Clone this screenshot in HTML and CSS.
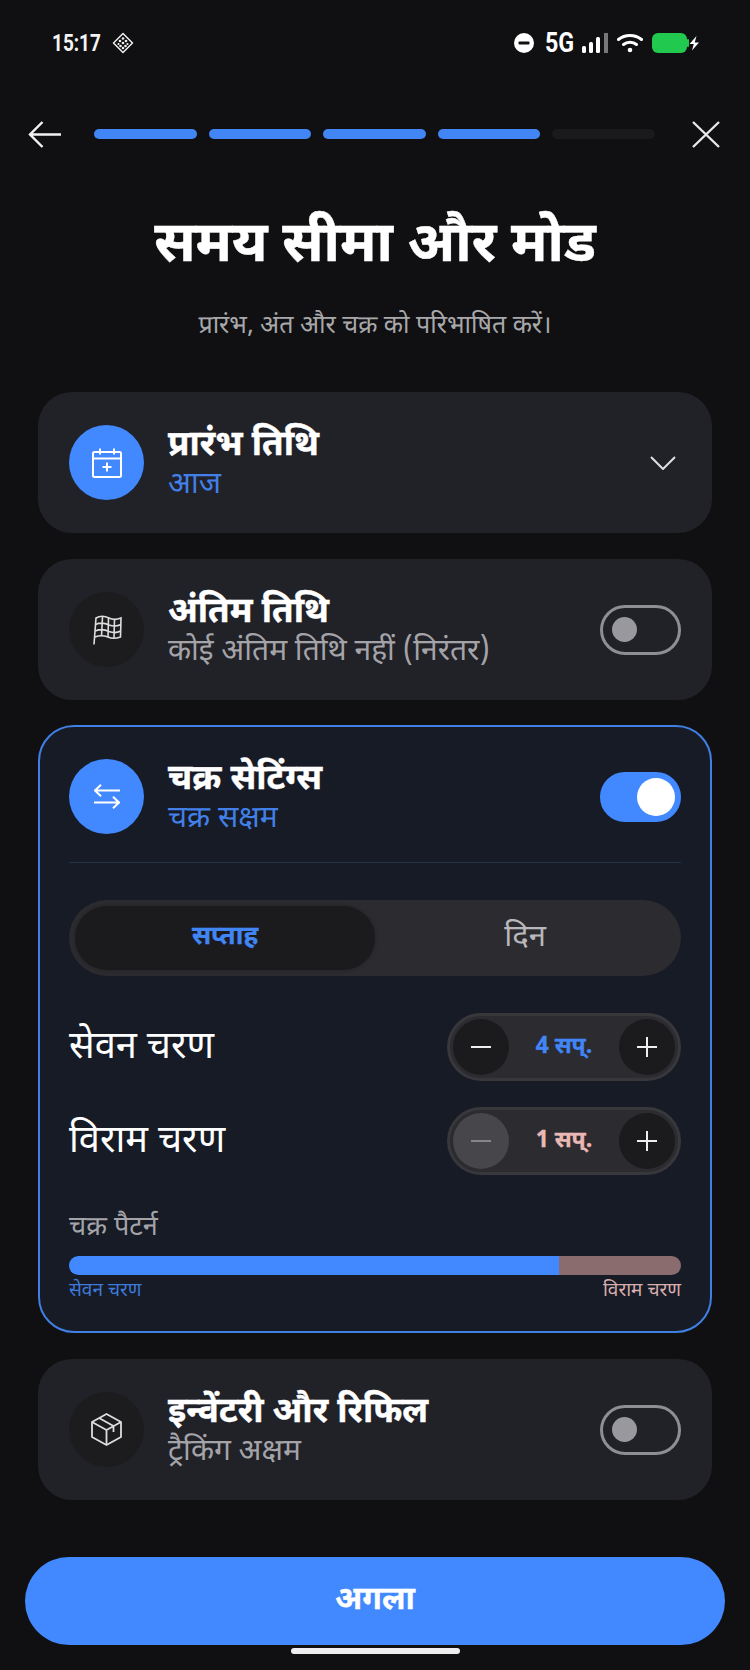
FILE: index.html
```html
<!DOCTYPE html>
<html lang="hi">
<head>
<meta charset="utf-8">
<title>समय सीमा और मोड</title>
<link rel="stylesheet" href="styles.css">
</head>
<body>
<main class="screen">
  <div class="status">
    <div class="status-left">
      <span class="time">15:17</span>
      <svg class="st-diamond" viewBox="0 0 22 22" fill="none" stroke="#eee" stroke-width="1.5"><path d="M11 1.500 20.500 11 11 20.500 1.500 11Z" stroke-linejoin="round"/><g fill="#eee" stroke="none"><circle cx="11" cy="6.500" r="1.300"/><circle cx="8" cy="9" r="1.300"/><circle cx="14" cy="9" r="1.300"/><circle cx="11" cy="11" r="1.300"/><circle cx="6.500" cy="12" r="1.100"/><circle cx="15.500" cy="12" r="1.100"/><circle cx="8.500" cy="14" r="1.300"/><circle cx="13.500" cy="14" r="1.300"/><circle cx="11" cy="16" r="1.300"/></g></svg>
    </div>
    <div class="status-right">
      <svg class="st-dnd" viewBox="0 0 20 20"><circle cx="10" cy="10" r="10" fill="#fff"/><rect x="4.500" y="8.400" width="11" height="3.200" rx="1" fill="#101012"/></svg>
      <span class="net">5G</span>
      <svg class="st-signal" viewBox="0 0 26 20"><rect x="0" y="13" width="4" height="7" rx="1.500" fill="#fff"/><rect x="7" y="9" width="4" height="11" rx="1.500" fill="#fff"/><rect x="14" y="4" width="4" height="16" rx="1.500" fill="#fff"/><rect x="22" y="0" width="4" height="20" fill="#77777a"/></svg>
      <svg class="st-wifi" viewBox="0 0 26 20" fill="none" stroke="#fff" stroke-width="3" stroke-linecap="round"><path d="M1.500 6.500C8 1 18 1 24.500 6.500"/><path d="M6.500 11.500C10 8.500 16 8.500 19.500 11.500"/><circle cx="13" cy="17" r="2.300" fill="#fff" stroke="none"/></svg>
      <svg class="st-batt" viewBox="0 0 47 20"><rect width="35" height="20" rx="6" fill="#22c94f"/><rect x="35" y="6" width="2" height="8" rx="1" fill="#22c94f"/><path d="M44.500 3 37.500 11h4.300L40 17.500 47 9.500h-4.300Z" fill="#fff"/></svg>
    </div>
  </div>

  <div class="toolbar">
    <svg class="tb-icon" viewBox="0 0 33 27" fill="none" stroke="#f2f2f2" stroke-width="2.400"><path d="M33 13.500H2M14.500 1 2 13.500 14.500 26"/></svg>
    <div class="progress">
      <span class="seg seg-on"></span><span class="seg seg-on"></span><span class="seg seg-on"></span><span class="seg seg-on"></span><span class="seg"></span>
    </div>
    <svg class="tb-close" viewBox="0 0 28 27" fill="none" stroke="#e8e8e8" stroke-width="2.400"><path d="M1 1 27 26M27 1 1 26"/></svg>
  </div>

  <h1 class="title">समय सीमा और मोड</h1>
  <p class="subtitle">प्रारंभ, अंत और चक्र को परिभाषित करें।</p>

  <section class="cards">
    <div class="card">
      <div class="row">
        <span class="badge badge-on">
          <svg class="ic" viewBox="0 0 30 30" fill="none" stroke="#fff" stroke-width="2"><rect x="1" y="4" width="28" height="25" rx="1.500"/><path d="M1 10.500H29M8 0.500V6.500M22 .5V6.500M15 14.500V23.500M10.500 19H19.500"/></svg>
        </span>
        <div class="meta"><div class="name">प्रारंभ तिथि</div><div class="sub sub-blue">आज</div></div>
        <svg class="chev" viewBox="0 0 26 14" fill="none" stroke="#e0e0e0" stroke-width="2"><path d="M1 1 13 13 25 1"/></svg>
      </div>
    </div>

    <div class="card">
      <div class="row">
        <span class="badge">
          <svg class="ic" viewBox="0 0 30 30" fill="none" stroke="#ddd" stroke-width="1.600"><path d="M2 29.500 4 3C9 0 14 1.500 17 3 20 4.500 24 5 29 3L28.500 22C23 24 19 23.500 16 22 12 20.500 8 20 3 22"/><path d="M10.500 2 9.500 21M16.500 3 16 22M22.500 4.500 22 23M3.500 9.500C9 7 13 8 17 10 21 11.500 25 11.500 29 9.500M3.200 16C9 13.500 13 14.500 17 16.500 21 18 25 18 28.700 16"/></svg>
        </span>
        <div class="meta"><div class="name">अंतिम तिथि</div><div class="sub">कोई अंतिम तिथि नहीं (निरंतर)</div></div>
        <span class="toggle"><span class="knob"></span></span>
      </div>
    </div>

    <div class="card card-active">
      <div class="row">
        <span class="badge badge-on">
          <svg class="ic-swap" viewBox="0 0 26 25" fill="none" stroke="#fff" stroke-width="2"><path d="M26 6.500H1M7 .8 1 6.500 7 12.200M0 18.500H25M19 12.800 25 18.500 19 24.200"/></svg>
        </span>
        <div class="meta"><div class="name">चक्र सेटिंग्स</div><div class="sub sub-blue">चक्र सक्षम</div></div>
        <span class="toggle toggle-on"><span class="knob"></span></span>
      </div>
      <hr class="rule">
      <div class="segmented">
        <span class="opt opt-on">सप्ताह</span>
        <span class="opt">दिन</span>
      </div>
      <div class="step-row">
        <span class="step-label">सेवन चरण</span>
        <div class="stepper">
          <span class="step-btn"><svg class="pm" viewBox="0 0 20 20" stroke="#eee" stroke-width="2"><path d="M0 10H20"/></svg></span>
          <span class="step-val val-blue">4 सप्.</span>
          <span class="step-btn"><svg class="pm" viewBox="0 0 20 20" stroke="#eee" stroke-width="2"><path d="M0 10H20M10 0V20"/></svg></span>
        </div>
      </div>
      <div class="step-row">
        <span class="step-label">विराम चरण</span>
        <div class="stepper">
          <span class="step-btn step-off"><svg class="pm" viewBox="0 0 20 20" stroke="#86868a" stroke-width="2"><path d="M0 10H20"/></svg></span>
          <span class="step-val val-pink">1 सप्.</span>
          <span class="step-btn"><svg class="pm" viewBox="0 0 20 20" stroke="#eee" stroke-width="2"><path d="M0 10H20M10 0V20"/></svg></span>
        </div>
      </div>
      <div class="pat-title">चक्र पैटर्न</div>
      <div class="bar"><span class="bar-a"></span><span class="bar-b"></span></div>
      <div class="bar-legend"><span class="lg-blue">सेवन चरण</span><span class="lg-pink">विराम चरण</span></div>
    </div>

    <div class="card">
      <div class="row">
        <span class="badge">
          <svg class="ic-box" viewBox="0 0 31 33" fill="none" stroke="#ddd" stroke-width="1.800" stroke-linejoin="round"><path d="M15.500 1 30 9V24L15.500 32 1 24V9Z"/><path d="M1 9 15.500 17 30 9M15.500 17V32M8 5 22.500 13V19"/></svg>
        </span>
        <div class="meta"><div class="name">इन्वेंटरी और रिफिल</div><div class="sub">ट्रैकिंग अक्षम</div></div>
        <span class="toggle"><span class="knob"></span></span>
      </div>
    </div>
  </section>

  <button class="next">अगला</button>
  <div class="home"></div>
</main>
</body>
</html>
```
FILE: styles.css
```css
* { box-sizing: border-box; }
html, body { margin: 0; padding: 0; background: #101012; }
body { font-family: "Noto Sans Devanagari", "Noto Sans", "Lohit Devanagari", "DejaVu Sans", sans-serif; color: #fff; }
.screen { width: 750px; height: 1670px; display: flex; flex-direction: column; overflow: hidden; background: #101012; }

.status { height: 86px; padding: 33px 51px 0 52px; display: flex; justify-content: space-between; align-items: flex-start; }
.status-left, .status-right { display: flex; align-items: center; height: 20px; }
.time { font-family: Roboto, sans-serif; font-weight: 700; font-size: 24px; width: 48px; white-space: nowrap; transform: scaleX(.79); transform-origin: left; color: #f4f4f4; }
.st-diamond { width: 22px; height: 22px; margin-left: 12px; }
.st-dnd { width: 20px; height: 20px; }
.net { font-family: Roboto, sans-serif; font-weight: 700; font-size: 27px; margin-left: 11px; width: 28px; transform: scaleX(.86); transform-origin: left; }
.st-signal { width: 26px; height: 20px; margin-left: 9px; }
.st-wifi { width: 26px; height: 20px; margin-left: 9px; }
.st-batt { width: 47px; height: 20px; margin-left: 9px; }

.toolbar { height: 40px; margin-top: 28px; padding: 0 30px 0 28px; display: flex; align-items: center; }
.tb-icon { width: 33px; height: 27px; flex: none; }
.tb-close { width: 28px; height: 27px; flex: none; }
.progress { flex: 1; display: flex; gap: 12px; margin: 0 37px 0 33px; }
.seg { flex: 1; height: 10px; border-radius: 5px; background: #1a1a1c; }
.seg-on { background: #4285f4; }

.title { margin: 61px 0 0; height: 66px; line-height: 66px; font-size: 56px; font-weight: 700; text-align: center; color: #fff; white-space: nowrap; -webkit-text-stroke: .4px #fff; }
.subtitle { margin: 28px 0 0; height: 36px; line-height: 36px; font-size: 25px; text-align: center; color: #a8a8ab; }

.cards { margin: 47px 38px 0; display: flex; flex-direction: column; gap: 26px; }
.card { background: #212128; border-radius: 34px; padding: 33px 31px; }
.card-active { background: #161b26; border: 2px solid #4080e4; padding: 32px 29px 27px; border-radius: 36px; margin-top: -1px; }
.row { display: flex; align-items: center; height: 75px; }
.badge { width: 75px; height: 75px; border-radius: 50%; flex: none; background: #1c1c1e; display: flex; align-items: center; justify-content: center; }
.badge-on { background: #4289ff; }
.ic { width: 30px; height: 30px; }
.ic-swap { width: 26px; height: 25px; }
.ic-box { width: 31px; height: 33px; }
.meta { flex: 1; margin-left: 24px; min-width: 0; padding-top: 7px; }
.name { font-size: 35px; line-height: 40px; font-weight: 700; color: #fff; white-space: nowrap; -webkit-text-stroke: .4px #fff; }
.sub { font-size: 30px; line-height: 38px; color: #a4a4a8; white-space: nowrap; }
.sub-blue { color: #4280e8; }
.chev { width: 26px; height: 14px; margin-right: 5px; flex: none; }
.toggle { width: 81px; height: 50px; flex: none; border: 3px solid #8e8e93; border-radius: 25px; display: flex; align-items: center; padding-left: 9px; }
.knob { width: 25px; height: 25px; border-radius: 50%; background: #98989d; display: block; }
.toggle-on { background: #4289ff; border-color: #4289ff; justify-content: flex-end; padding: 0 3px 0 0; }
.toggle-on .knob { width: 38px; height: 38px; background: #fff; }

.rule { border: 0; height: 1px; margin: 28px 0 37px; background: #233149; }
.segmented { height: 76px; border-radius: 38px; background: #2b2b30; padding: 6px; display: flex; }
.opt { flex: 1; display: flex; align-items: center; justify-content: center; font-size: 31px; color: #b8b8bb; border-radius: 32px; }
.opt-on { flex: none; width: 300px; background: #1b1b1d; color: #4285f4; font-size: 26px; font-weight: 700; box-shadow: 0 0 4px rgba(0,0,0,.25); -webkit-text-stroke: .3px #4285f4; }

.step-row { display: flex; align-items: center; justify-content: space-between; margin-top: 26px; height: 68px; }
.segmented + .step-row { margin-top: 37px; }
.step-label { font-size: 38px; color: #fff; padding-top: 4px; }
.stepper { width: 234px; height: 68px; padding: 3px; border: 3px solid #37373c; border-radius: 34px; background: #2b2b30; display: flex; align-items: center; justify-content: space-between; }
.step-btn { width: 56px; height: 56px; border-radius: 50%; background: #1b1b1d; display: flex; align-items: center; justify-content: center; flex: none; }
.step-off { background: #47474b; }
.pm { width: 20px; height: 20px; }
.step-val { font-size: 23px; font-weight: 700; white-space: nowrap; -webkit-text-stroke: .3px currentColor; }
.val-blue { color: #4285f4; }
.val-pink { color: #eab8b4; }

.pat-title { margin-top: 38px; font-size: 27px; line-height: 32px; color: #a4a4a8; }
.bar { margin-top: 11px; height: 19px; border-radius: 10px; overflow: hidden; display: flex; }
.bar-a { flex: 4; background: #4289ff; }
.bar-b { flex: 1; background: #8a6c6f; }
.bar-legend { margin-top: 5px; display: flex; justify-content: space-between; font-size: 19px; line-height: 24px; }
.lg-blue { color: #3e78d8; }
.lg-pink { color: #d8aeac; }

.next { margin: 57px 25px 0; height: 88px; flex: none; border: 0; border-radius: 44px; background: #4289ff; color: #fff; font-family: inherit; font-size: 32px; font-weight: 700; -webkit-text-stroke: .3px #fff; }
.home { width: 169px; height: 6px; border-radius: 3px; background: #eeeeee; margin: 3px auto 0; flex: none; }
```
